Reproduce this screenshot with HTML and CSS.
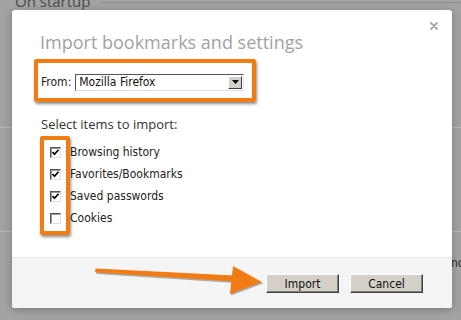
FILE: index.html
```html
<!DOCTYPE html>
<html lang="en">
<head>
    <meta charset="UTF-8">
    <meta name="viewport" content="width=device-width, initial-scale=1.0">
    <title>Import bookmarks and settings</title>
    <link rel="stylesheet" href="styles.css">
</head>
<body>
    <!-- Settings page behind the modal -->
    <div class="settings">
        <div class="section startup">
            <h2>On startup</h2>
            <span class="rule"></span>
        </div>
        <div class="section appearance"></div>
        <div class="section sync">
            <p class="peek">nc</p>
        </div>
    </div>

    <!-- Modal -->
    <div class="dialog">
        <div class="dialog-body">
            <span class="close">
                <svg width="8" height="8" viewBox="0 0 8 8"><path d="M1 1 L7 7 M7 1 L1 7" stroke="#a8a8a8" stroke-width="1.8" stroke-linecap="round"/></svg>
            </span>
            <h1 class="title">Import bookmarks and settings</h1>

            <div class="mark from-row">
                <label class="from-label">From:</label>
                <div class="select">
                    <span class="select-value">Mozilla Firefox</span>
                    <span class="select-btn">
                        <svg width="7" height="4" viewBox="0 0 7 4"><path d="M0 0 H7 L3.5 4 Z" fill="#000"/></svg>
                    </span>
                </div>
            </div>

            <p class="items-label">Select items to import:</p>

            <div class="items">
                <div class="mark checks">
                    <span class="check on"></span>
                    <span class="check on"></span>
                    <span class="check on"></span>
                    <span class="check"></span>
                </div>
                <ul class="labels">
                    <li>Browsing history</li>
                    <li>Favorites/Bookmarks</li>
                    <li>Saved passwords</li>
                    <li>Cookies</li>
                </ul>
            </div>
        </div>

        <div class="dialog-footer">
            <svg class="arrow" width="180" height="34" viewBox="0 0 180 34">
                <g transform="translate(1 1.5)" fill="rgba(0,0,0,0.3)">
                    <path d="M2 3.5 Q0 5.5 2 7.5 L140 16.5 L140 10.5 Z"/>
                    <path d="M139 1 L168 17 L136 29 Z"/>
                </g>
                <path d="M2 3.5 Q0 5.5 2 7.5 L140 16.5 L140 10.5 Z" fill="#f27c14"/>
                <path d="M139 1 L168 17 L136 29 Z" fill="#f27c14"/>
            </svg>
            <button class="btn">Import</button>
            <button class="btn">Cancel</button>
        </div>
    </div>
</body>
</html>
```

FILE: styles.css
```css
body {
    margin: 0;
    width: 461px;
    height: 320px;
    overflow: hidden;
    position: relative;
    background: #a3a3a3;
    font-family: 'DejaVu Sans Condensed', 'DejaVu Sans', sans-serif;
}

/* Dimmed page underneath */
.settings {
    margin-top: -9px;
}

.section {
    border-bottom: 1px solid #b7b7b7;
}

.startup {
    display: flex;
    align-items: flex-start;
    gap: 10px;
    height: 136px;
}

.startup h2 {
    margin: 0 0 0 15px;
    font-family: 'Open Sans', sans-serif;
    font-weight: 400;
    font-size: 15px;
    line-height: 20px;
    color: #4a4a4a;
}

.rule {
    flex: 1;
    margin-top: 11px;
    border-top: 1px solid #8e8e8e;
}

.appearance {
    height: 103px;
}

.sync {
    border-bottom: none;
}

.peek {
    margin: 24px 0 0 451px;
    font-size: 12px;
    color: #2a2a2a;
    white-space: nowrap;
}

/* Modal */
.dialog {
    position: absolute;
    left: 12px;
    top: 10px;
    width: 440px;
    height: 298px;
    background: #fff;
    border-radius: 3px;
    box-shadow: 0 2px 8px rgba(0, 0, 0, 0.25);
    display: flex;
    flex-direction: column;
    overflow: hidden;
}

.dialog-body {
    flex: 1;
    position: relative;
    padding: 20px 0 0 22px;
}

.close {
    position: absolute;
    top: 12px;
    right: 14px;
    line-height: 0;
}

.title {
    margin: 0 0 5px 6px;
    font-family: 'Open Sans', sans-serif;
    font-weight: 400;
    font-size: 18px;
    line-height: 24px;
    color: #a2a2a2;
}

.mark {
    border: 4px solid #f27c14;
    border-radius: 2px;
    box-shadow: 1px 2px 3px rgba(0, 0, 0, 0.45);
}

.from-row {
    display: flex;
    align-items: center;
    gap: 4px;
    padding: 3px 0 0 3px;
    width: 211px;
    height: 32px;
}

.from-label {
    font-size: 12px;
    color: #222;
}

.select {
    width: 167px;
    height: 15px;
    display: flex;
    align-items: center;
    border: 1px solid;
    border-color: #555 #e0e0e0 #e0e0e0 #555;
    background: #fff;
}

.select-value {
    flex: 1;
    padding-left: 3px;
    font-size: 12px;
    color: #111;
}

.select-btn {
    width: 14px;
    height: 13px;
    margin-right: 1px;
    display: flex;
    align-items: center;
    justify-content: center;
    background: #d4d0c8;
    border: 1px solid;
    border-color: #fff #404040 #404040 #fff;
    box-sizing: border-box;
}

.items-label {
    margin: 13px 0 0 7px;
    font-family: 'Open Sans', sans-serif;
    font-size: 13px;
    line-height: 18px;
    color: #333;
}

.items {
    display: flex;
    margin: 3px 0 0 6px;
}

.checks {
    width: 22px;
    display: flex;
    flex-direction: column;
    align-items: center;
    gap: 11px;
    padding: 7px 0 7px;
}

.check {
    width: 11px;
    height: 11px;
    box-sizing: border-box;
    background: #fff;
    border: 1px solid;
    border-color: #555 #ddd #ddd #555;
    box-shadow: inset 1px 1px 0 #999;
}

.check.on {
    background: #fff url("data:image/svg+xml;utf8,<svg xmlns='http://www.w3.org/2000/svg' width='9' height='9' viewBox='0 0 9 9'><path d='M1.5 4 L3.5 6.2 L7.5 1.8' fill='none' stroke='black' stroke-width='1.7'/></svg>") center / 9px 9px no-repeat;
}

.labels {
    list-style: none;
    margin: 0;
    padding: 5px 0 0 0;
    font-size: 12px;
    line-height: 22px;
    color: #222;
}

.dialog-footer {
    position: relative;
    height: 51px;
    background: #f5f5f5;
    border-top: 1px solid #e2e2e2;
    display: flex;
    justify-content: flex-end;
    align-items: flex-start;
    gap: 11px;
    padding: 16px 29px 0 0;
    box-sizing: border-box;
}

.arrow {
    position: absolute;
    left: 82px;
    top: 7px;
}

.btn {
    width: 73px;
    height: 19px;
    padding: 0;
    font-family: 'DejaVu Sans Condensed', 'DejaVu Sans', sans-serif;
    font-size: 12px;
    color: #111;
    background: #d4d0c8;
    border: 1px solid;
    border-color: #fff #404040 #404040 #fff;
    box-shadow: inset -1px -1px 0 #808080;
    border-radius: 0;
}
```
